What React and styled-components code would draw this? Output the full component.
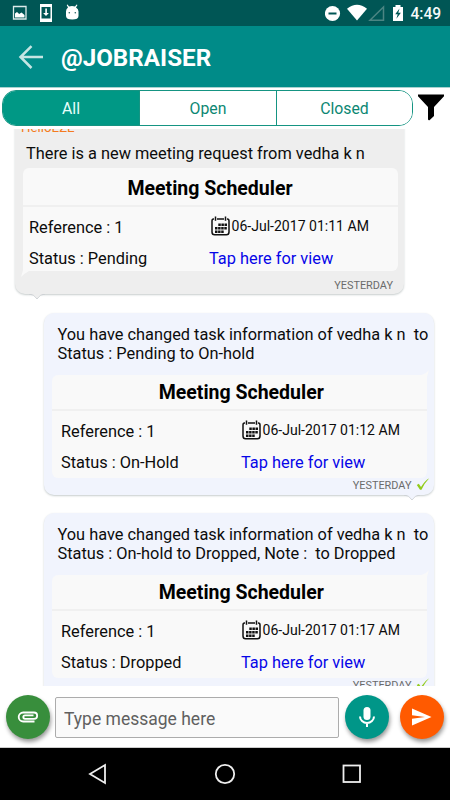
import React from "react";
import styled, { createGlobalStyle, css } from "styled-components";

const GlobalStyle = createGlobalStyle`
  * { box-sizing: border-box; }
  body { margin: 0; background: #fff; font-family: Roboto, sans-serif; color: #0c0c0c; }
  button { font: inherit; border: 0; padding: 0; margin: 0; background: none; }
`;

const Screen = styled.div`
  width: 450px;
  height: 800px;
  display: flex;
  flex-direction: column;
  overflow: hidden;
  background: #fff;
`;

const StatusBar = styled.header`
  height: 26px;
  flex: none;
  background: #005655;
  display: flex;
  justify-content: space-between;
`;

const StatusIcons = styled.svg`
  display: block;
  flex: none;
`;

const StatusRight = styled.div`
  display: flex;
`;

const Clock = styled.span`
  width: 39.500px;
  color: #f5fafa;
  font-size: 15.6px;
  font-weight: 500;
  line-height: 29px;
  white-space: nowrap;
`;

const AppBar = styled.div`
  height: 61px;
  flex: none;
  background: #008b88;
  display: flex;
  align-items: center;
  padding-left: 18px;
`;

const Title = styled.h1`
  margin: 3px 0 0 17px;
  color: #fff;
  font-size: 24.2px;
  line-height: 28px;
  font-weight: 700;
`;

const FilterRow = styled.div`
  height: 42px;
  flex: none;
  padding: 2px 0 3px 2px;
  display: flex;
  border-top: 1px solid #a9d2d0;
`;

const Tabs = styled.div`
  width: 411px;
  height: 36px;
  display: grid;
  grid-template-columns: 136px 137px 1fr;
  border: 1px solid #159482;
  border-radius: 14px;
  overflow: hidden;
`;

const Tab = styled.button`
  color: ${(p) => (p.$active ? "#e8fffb" : "#0c8773")};
  background: ${(p) => (p.$active ? "#009885" : "#fff")};
  font-size: 15.8px;
  line-height: 32px;
  padding-top: 2px;
  & + & { border-left: 1px solid #159482; }
`;

const FilterIcon = styled.svg`
  margin: 3px 0 0 4px;
`;

const MessageList = styled.main`
  height: 557px;
  flex: none;
  overflow: hidden;
  display: flex;
  flex-direction: column;
`;

const incoming = css`
  width: 389px;
  height: 177px;
  margin: -12px 0 19px 15px;
  background: #eee;
  border-radius: 10px;
  padding: 3px 7px 0 8px;
`;

const outgoing = css`
  width: 389.500px;
  height: 181.500px;
  margin: 0 0 18.500px 44px;
  background: #f1f4fd;
  border-radius: 10px;
  padding: 11px 0 0 8px;
`;

const Bubble = styled.article`
  position: relative;
  flex: none;
  box-shadow: 0 1px 2px rgba(70, 90, 90, 0.3);
  ${(p) => (p.$outgoing ? outgoing : incoming)}
`;

const BubbleTail = styled.svg`
  position: absolute;
  top: 100%;
  margin-top: -1px;
  ${(p) => (p.$outgoing ? "right: 14px;" : "left: 14px;")}
`;

const Sender = styled.div`
  font-size: 13.3px;
  line-height: 16px;
  margin-left: -2px;
  height: 14px;
  color: #f47b20;
`;

const Message = styled.p`
  margin: 0;
  padding-left: ${(p) => (p.$outgoing ? 5.5 : 3)}px;
  font-size: 16.35px;
  line-height: 19.2px;
  white-space: pre;
  height: ${(p) => (p.$outgoing ? 48 : 29)}px;
  padding-top: ${(p) => (p.$outgoing ? 0.8 : 9.8)}px;
`;

const Card = styled.section`
  position: relative;
  width: 375px;
  height: 103px;
  margin-top: ${(p) => (p.$outgoing ? 3 : 5)}px;
  background: #f9f9f9;
  border-radius: 6px;
  padding-top: ${(p) => (p.$outgoing ? 4 : 7)}px;
  ${(p) => (p.$outgoing ? "border-top-right-radius: 0;" : "border-bottom-left-radius: 0;")}
`;

const CardTail = styled.svg`
  position: absolute;
  ${(p) => (p.$outgoing ? "right: -2px; top: -5px;" : "left: -2px; bottom: -6px;")}
`;

const CardTitle = styled.h2`
  margin: 0;
  height: 32px;
  padding-left: ${(p) => (p.$outgoing ? 3.5 : 0)}px;
  padding-right: ${(p) => (p.$outgoing ? 0 : 1)}px;
  font-size: 19.5px;
  line-height: 27px;
  font-weight: 700;
  text-align: center;
  color: #000;
  border-bottom: 2px solid #f0f0f0;
`;

const Details = styled.div`
  display: grid;
  grid-template-columns: 180px 1fr;
  grid-template-rows: 31px 31px;
  padding: ${(p) => (p.$outgoing ? "5px 0 0 9px" : "5px 0 0 6px")};
  font-size: 16.35px;
  line-height: 31px;
  white-space: nowrap;
`;

const DateCell = styled.div`
  display: flex;
  font-size: 14.05px;
  line-height: 28px;
  padding-left: ${(p) => (p.$outgoing ? 1 : 2)}px;
`;

const CalendarIcon = styled.svg`
  flex: none;
  margin: 4px 1.500px 0 0;
`;

const Link = styled.a`
  color: #0606e8;
`;

const Stamp = styled.footer`
  display: flex;
  justify-content: flex-end;
  font-size: 10.9px;
  line-height: 14px;
  color: #6b6b6b;
  margin-top: ${(p) => (p.$outgoing ? 1 : 8)}px;
  padding-right: 4px;
`;

const Tick = styled.svg`
  margin: -2px 0 0 4px;
`;

const Composer = styled.div`
  height: 62px;
  flex: none;
  display: flex;
  align-items: center;
  padding: 1px 6px 0;
  border-bottom: 1px solid #ccc;
`;

const Field = styled.input`
  width: 284px;
  height: 41px;
  margin: 0 6px 0 5px;
  border: 1px solid #acacac;
  border-radius: 2px;
  background: #fafafa;
  padding: 3px 8px 0;
  font: 17.5px Roboto, sans-serif;
  outline: 0;
  &::placeholder { color: #606060; opacity: 1; }
`;

const RoundButton = styled.button`
  width: 44px;
  height: 44px;
  flex: none;
  border-radius: 50%;
  background: ${(p) => p.$color};
  box-shadow: 1px 3px 4px rgba(0, 0, 0, 0.4);
  margin-left: ${(p) => p.$gap || 0}px;
  svg { display: block; }
`;

const NavBar = styled.nav`
  height: 52px;
  flex: none;
  background: #000;
  display: flex;
  align-items: center;
  justify-content: center;
  gap: 103px;
`;

function Calendar() {
  return (
    <CalendarIcon width="19" height="20" viewBox="0 0 19 20" fill="none" stroke="#111" strokeWidth="1.5">
      <path d="M3 3H2.5Q1 3 1 5v11q0 2.8 2.6 2.8h11.8Q18 18.800 18 16V5q0-2-1.700-2H16M6 3h7M4.500 .5v4.300M14.500 .5v4.300" />
      <path d="M7.300 8.700h8.700M4 12.200h12M4 15.700h8.700" strokeWidth="2.500" strokeDasharray="2.500 .6" />
    </CalendarIcon>
  );
}

function Meeting({ outgoing, status, time }) {
  return (
    <Card $outgoing={outgoing}>
      <CardTail $outgoing={outgoing} width="8" height="7" viewBox="0 0 8 7">
        <path d={outgoing ? "M0 5Q5 4 8 0L6 7H0Z" : "M2 0L0 7Q4 3 8 1V0Z"} fill="#f9f9f9" />
      </CardTail>
      <CardTitle $outgoing={outgoing}>Meeting Scheduler</CardTitle>
      <Details $outgoing={outgoing}>
        <span>Reference : 1</span>
        <DateCell $outgoing={outgoing}><Calendar />06-Jul-2017 {time} AM</DateCell>
        <span>Status : {status}</span>
        <Link>Tap here for view</Link>
      </Details>
    </Card>
  );
}

function MessageBubble({ outgoing, sender, text, status, time }) {
  return (
    <Bubble $outgoing={outgoing}>
      {sender && <Sender>{sender}</Sender>}
      <Message $outgoing={outgoing}>{text}</Message>
      <Meeting outgoing={outgoing} status={status} time={time} />
      <Stamp $outgoing={outgoing}>
        YESTERDAY
        {outgoing && (
          <Tick width="14" height="14" viewBox="0 0 14 14">
            <path d="M.8 8l2-1.200L5 10Q8.500 4 13.200 1.200 8.500 6 5.500 12.800H4Z" fill="#92cc1b" />
          </Tick>
        )}
      </Stamp>
      <BubbleTail $outgoing={outgoing} width="16" height="7" viewBox="0 0 16 7">
        <path d="M0 1Q5 1 8 6 11 1 16 1" fill={outgoing ? "#f1f4fd" : "#eee"} stroke="#c9cdd0" strokeWidth=".8" />
        <path d="M0 0H16V1H0Z" fill={outgoing ? "#f1f4fd" : "#eee"} />
      </BubbleTail>
    </Bubble>
  );
}

export default function App() {
  return (
    <Screen>
      <GlobalStyle />
      <StatusBar>
        <StatusIcons width="90" height="26" viewBox="0 0 90 26">
          <path d="M13.500 6.500h12.500v12.500H13.500z" fill="none" stroke="#dceaea" strokeWidth="1.300" />
          <path d="M15 17.500v-4l2-1.500 2.200 2 2.300-1.500 3 2.500v2.500z" fill="#fff" />
          <path d="M40 4h12v18H40zM41.500 7v11.500h9V7z" fill="#fff" fillRule="evenodd" />
          <path d="M45.300 8.500h1.600v4.500h2L46 16l-2.900-3h2.200z" fill="#fff" />
          <path d="M66 11.500q0-2.500 2-4L66.700 5l.9-.4L69 6.600q3-1 6 0l1.600-2.200.9.500-1.500 2.600q2.500 1.500 2.500 4V16q0 3.500-6.200 3.500T66 16z" fill="#fff" />
          <circle cx="69.300" cy="12.800" r=".8" fill="#24605f" />
          <circle cx="75.300" cy="12.800" r=".8" fill="#24605f" />
        </StatusIcons>
        <StatusRight>
          <StatusIcons width="85.500" height="26" viewBox="325 0 85.500 26">
            <circle cx="332.500" cy="13.500" r="7.600" fill="#fff" />
            <path d="M328.500 12.500h8v2h-8z" fill="#005655" />
            <path d="M347 8.700Q357 1 367 8.700L357 20.500z" fill="#fff" />
            <path d="M370 20.300h13.500V7z" fill="none" stroke="#4b8583" strokeWidth="1.500" />
            <path d="M393 7h2.500V5h5v2h2.500v14h-10z" fill="#fff" />
            <path d="M399.500 8.500l-4.300 5.700h2.500l-1.300 4.500 4.500-6h-2.600z" fill="#005655" />
          </StatusIcons>
          <Clock>4:49</Clock>
        </StatusRight>
      </StatusBar>
      <AppBar>
        <svg width="26" height="24" viewBox="0 0 26 24" fill="none" stroke="#c5e5e3" strokeWidth="2.500">
          <path d="M25 12H3M13.500 1.200L2.500 12l11 11" />
        </svg>
        <Title>@JOBRAISER</Title>
      </AppBar>
      <FilterRow>
        <Tabs>
          <Tab $active>All</Tab>
          <Tab>Open</Tab>
          <Tab>Closed</Tab>
        </Tabs>
        <FilterIcon width="28" height="28" viewBox="0 0 28 28">
          <path d="M1 1.500h26v1.800L17 14v9l-4.500 4.200Q11 27.500 11 26V14L1 3.300z" fill="#000" />
        </FilterIcon>
      </FilterRow>
      <MessageList>
        <MessageBubble sender="HelloEZE" text="There is a new meeting request from vedha k n" status="Pending" time="01:11" />
        <MessageBubble outgoing text={"You have changed task information of vedha k n  to\nStatus : Pending to On-hold"} status="On-Hold" time="01:12" />
        <MessageBubble outgoing text={"You have changed task information of vedha k n  to\nStatus : On-hold to Dropped, Note :  to Dropped"} status="Dropped" time="01:17" />
      </MessageList>
      <Composer>
        <RoundButton $color="#388e3c" aria-label="Attach">
          <svg width="44" height="44" viewBox="0 0 44 44" fill="none" stroke="#fff" strokeWidth="1.800">
            <path d="M28.500 26.500H17.200a4.500 4.500 0 0 1 0-9H28a3.100 3.100 0 0 1 0 6.300H19a1.700 1.700 0 0 1 0-3.400h8.500" />
          </svg>
        </RoundButton>
        <Field placeholder="Type message here" />
        <RoundButton $color="#009688" aria-label="Record">
          <svg width="44" height="44" viewBox="0 0 44 44">
            <rect x="18.500" y="12" width="7" height="13" rx="3.500" fill="#fff" />
            <path d="M15 21.500a7 6.500 0 0 0 14 0M22 28v4" fill="none" stroke="#fff" strokeWidth="2" />
          </svg>
        </RoundButton>
        <RoundButton $color="#ff5a00" $gap={11} aria-label="Send">
          <svg width="44" height="44" viewBox="0 0 44 44">
            <path d="M12 13.500L31.500 22 12 30.500v-6.800L25 22l-13-1.700z" fill="#fff" />
          </svg>
        </RoundButton>
      </Composer>
      <NavBar>
        <svg width="24" height="24" viewBox="0 0 24 24"><path d="M19 3v18L4 12z" fill="none" stroke="#eee" strokeWidth="1.800" /></svg>
        <svg width="24" height="24" viewBox="0 0 24 24"><circle cx="12" cy="12" r="9.200" fill="none" stroke="#eee" strokeWidth="1.800" /></svg>
        <svg width="24" height="24" viewBox="0 0 24 24"><rect x="3.500" y="3.500" width="16.500" height="16.500" fill="none" stroke="#eee" strokeWidth="1.800" /></svg>
      </NavBar>
    </Screen>
  );
}
